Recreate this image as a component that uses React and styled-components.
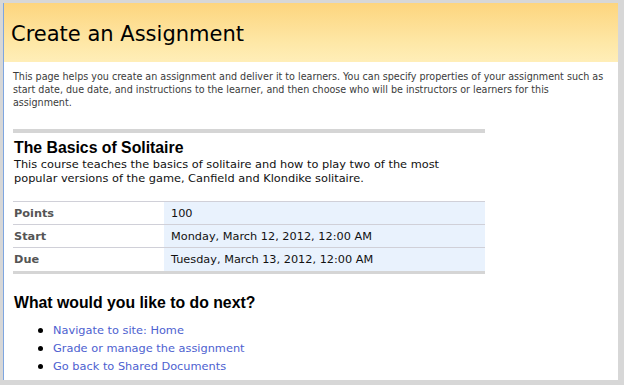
import React from 'react'
import styled, { createGlobalStyle } from 'styled-components'

const GlobalStyle = createGlobalStyle`
  html, body {
    margin: 0;
    padding: 0;
    background: #d7d7d7;
  }
`

const Frame = styled.div`
  box-sizing: border-box;
  margin: 3px 6px 0 3px;
  height: 377px;
  background: #fff;
  border-left: 1px solid #7ea6e0;
  overflow: hidden;
`

const Header = styled.div`
  height: 59px;
  background: linear-gradient(to bottom, #fdd57e 0%, #fee8a8 70%, #ffeeb8 100%);
  display: flex;
  align-items: center;
  padding: 3px 0 0 7px;
  box-sizing: border-box;
`

const Title = styled.h1`
  margin: 0;
  font-family: "DejaVu Sans", Verdana, sans-serif;
  font-weight: normal;
  font-size: 21px;
  color: #000;
`

const Body = styled.div`
  padding: 8px 9px 0 9px;
`

const Intro = styled.p`
  margin: 0;
  font-family: "DejaVu Sans Condensed", "DejaVu Sans", sans-serif;
  font-size: 10.65px;
  line-height: 13px;
  color: #3b3b3b;
  width: 596px;
`

const Course = styled.div`
  margin-top: 20px;
  width: 472px;
  border-top: 4px solid #d5d5d5;
  border-bottom: 3px solid #d5d5d5;
`

const CourseTitle = styled.h2`
  margin: 5px 0 0 1px;
  font-family: "Liberation Sans", Arial, sans-serif;
  font-weight: bold;
  font-size: 15.8px;
  line-height: 19px;
  color: #000;
`

const CourseText = styled.p`
  margin: 0 0 0 1px;
  font-family: "DejaVu Sans", Verdana, sans-serif;
  font-size: 11.35px;
  line-height: 14px;
  color: #111;
  width: 450px;
`

const Table = styled.div`
  margin-top: 16px;
  border-top: 1px solid #d0d0d8;
`

const Row = styled.div`
  display: grid;
  grid-template-columns: 151px 1fr;
  height: 23px;
  border-bottom: ${props => props.last ? 'none' : '1px solid #d0d0d8'};
  box-sizing: border-box;
  font-family: "DejaVu Sans", Verdana, sans-serif;
  font-size: 11.3px;
`

const Label = styled.div`
  display: flex;
  align-items: center;
  padding-left: 1px;
  font-weight: bold;
  color: #555;
`

const Value = styled.div`
  display: flex;
  align-items: center;
  padding-left: 7px;
  background: #e9f2fd;
  color: #111;
`

const NextTitle = styled.h2`
  margin: 19px 0 0 1px;
  font-family: "Liberation Sans", Arial, sans-serif;
  font-weight: bold;
  font-size: 15.8px;
  line-height: 20px;
  color: #000;
`

const Links = styled.ul`
  margin: 8px 0 0 0;
  padding-left: 40px;
  list-style: none;
  font-family: "DejaVu Sans", Verdana, sans-serif;
  font-size: 11.35px;
  line-height: 18px;
  color: #000;
`

const LinkItem = styled.li`
  &::before {
    content: '';
    display: inline-block;
    width: 5px;
    height: 5px;
    border-radius: 50%;
    background: #000;
    margin: 0 10px 1px -15px;
    vertical-align: middle;
  }
`

const Link = styled.a`
  color: #4d61d0;
  text-decoration: none;
`

const rows = [
  ['Points', '100'],
  ['Start', 'Monday, March 12, 2012, 12:00 AM'],
  ['Due', 'Tuesday, March 13, 2012, 12:00 AM']
]

const links = [
  'Navigate to site: Home',
  'Grade or manage the assignment',
  'Go back to Shared Documents'
]

export default function App () {
  return (<>
    <GlobalStyle />
    <Frame>
      <Header>
        <Title>Create an Assignment</Title>
      </Header>
      <Body>
        <Intro>
          This page helps you create an assignment and deliver it to learners. You can specify properties of your assignment such as start date, due date, and instructions to the learner, and then choose who will be instructors or learners for this assignment.
        </Intro>
        <Course>
          <CourseTitle>The Basics of Solitaire</CourseTitle>
          <CourseText>
            This course teaches the basics of solitaire and how to play two of the most popular versions of the game, Canfield and Klondike solitaire.
          </CourseText>
          <Table>
            {rows.map(([label, value], i) => (
              <Row key={label} last={i === rows.length - 1}>
                <Label>{label}</Label>
                <Value>{value}</Value>
              </Row>
            ))}
          </Table>
        </Course>
        <NextTitle>What would you like to do next?</NextTitle>
        <Links>
          {links.map(text => (
            <LinkItem key={text}><Link href='#'>{text}</Link></LinkItem>
          ))}
        </Links>
      </Body>
    </Frame>
  </>)
}
